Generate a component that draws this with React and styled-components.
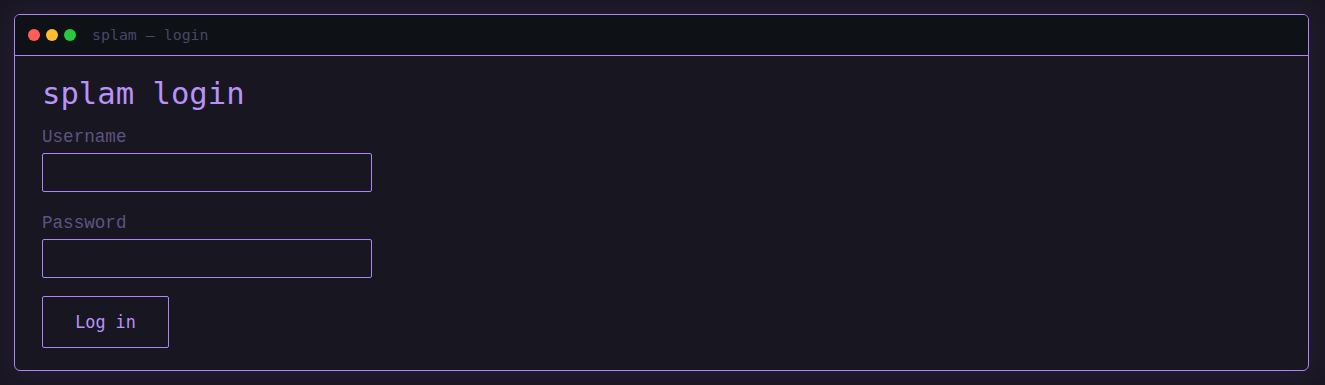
import React from "react";
import styled, { createGlobalStyle } from "styled-components";

const Global = createGlobalStyle`
  html, body { margin: 0; padding: 0; background: #1a1723; }
  body { padding: 14px 16px 14px 14px; box-sizing: border-box; }
  * { box-sizing: border-box; }
`;

const Window = styled.div`
  border: 1px solid #ac85f6;
  border-radius: 6px;
  background: #181621;
  overflow: hidden;
  box-shadow: 0 0 24px rgba(60, 45, 90, 0.35);
`;

const TitleBar = styled.div`
  height: 41px;
  background: #0e1116;
  border-bottom: 1px solid #ac85f6;
  display: flex;
  align-items: center;
  padding-left: 13px;
  gap: 6px;
`;

const Dot = styled.span`
  width: 12px;
  height: 12px;
  border-radius: 50%;
  background: ${(p) => p.$c};
`;

const TitleText = styled.span`
  margin-left: 10px;
  font-family: "DejaVu Sans Mono", monospace;
  font-size: 14.9px;
  line-height: 18px;
  margin-top: -1px;
  color: #4b4568;
`;

const Content = styled.div`
  padding: 20px 27px 22px;
  display: flex;
  flex-direction: column;
  align-items: flex-start;
`;

const Heading = styled.h1`
  margin: 0 0 16px;
  font-family: "DejaVu Sans Mono", monospace;
  font-weight: normal;
  font-size: 30.6px;
  line-height: 35px;
  color: #b892f7;
`;

const Field = styled.div`
  display: flex;
  flex-direction: column;
  gap: 6px;
  margin-bottom: ${(p) => p.$mb}px;
`;

const Label = styled.label`
  font-family: "Liberation Mono", monospace;
  font-size: 17.6px;
  line-height: 20px;
  color: #5e5380;
`;

const Input = styled.input`
  width: 330px;
  height: 39px;
  background: transparent;
  border: 1px solid #ac85f6;
  border-radius: 2px;
  outline: none;
  color: #b892f7;
  font-family: "DejaVu Sans Mono", monospace;
  font-size: 16px;
  padding: 0 10px;
`;

const Button = styled.button`
  width: 127px;
  height: 52px;
  background: transparent;
  border: 1px solid #ac85f6;
  border-radius: 2px;
  color: #b892f7;
  font-family: "DejaVu Sans Mono", monospace;
  font-size: 16.8px;
  padding: 0;
  cursor: pointer;
`;

export default function App() {
  return (
    <>
      <Global />
      <Window>
        <TitleBar>
          <Dot $c="#ff5f57" />
          <Dot $c="#febc2e" />
          <Dot $c="#28c840" />
          <TitleText>splam — login</TitleText>
        </TitleBar>
        <Content>
          <Heading>splam login</Heading>
          <Field $mb={21}>
            <Label htmlFor="u">Username</Label>
            <Input id="u" type="text" />
          </Field>
          <Field $mb={18}>
            <Label htmlFor="p">Password</Label>
            <Input id="p" type="password" />
          </Field>
          <Button>Log in</Button>
        </Content>
      </Window>
    </>
  );
}
